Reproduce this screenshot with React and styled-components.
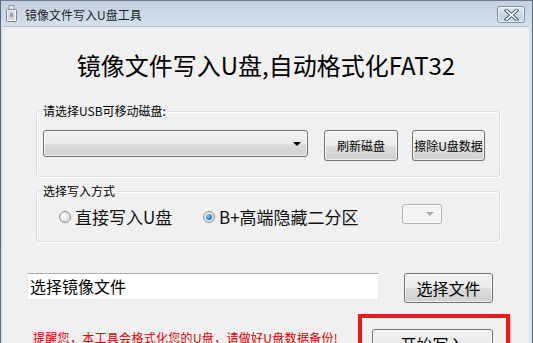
import React from "react";
import styled, { createGlobalStyle } from "styled-components";

const GlobalStyle = createGlobalStyle`
    html, body {
        margin: 0;
        padding: 0;
        background: #f0f0f0;
    }
    body {
        font-family: "Noto Sans CJK SC", "Liberation Sans", sans-serif;
    }
`;

const Frame = styled.div`
    width: 533px;
    height: 343px;
    box-sizing: border-box;
    overflow: hidden;
    display: flex;
    flex-direction: column;
    background: linear-gradient(#c2d0e0, #d6e1ee 26px, #dbe5f1);
    border-top: 1px solid #6f7c8b;
    border-left: 1px solid #5b6673;
    border-right: 1px solid #5b6673;
    padding: 0 3px 0 2px;
`;

const TitleBar = styled.div`
    height: 25px;
    display: flex;
    align-items: center;
    padding-left: 2px;
    flex-shrink: 0;
`;

const TitleText = styled.span`
    font-size: 12px;
    color: #1e1e1e;
    margin-left: 7px;
    line-height: 14px;
    padding-top: 2px;
`;

const CloseButton = styled.div`
    margin-left: auto;
    margin-right: 4px;
    margin-top: 2px;
    width: 28px;
    height: 17px;
    box-sizing: border-box;
    border: 1px solid #7d8ea3;
    border-radius: 3px;
    background: linear-gradient(#e3ebf4, #cdd9e7 50%, #c3d1e2 51%, #d3deeb);
    box-shadow: inset 0 0 0 1px rgba(255, 255, 255, 0.6);
    display: flex;
    align-items: center;
    justify-content: center;
`;

const Client = styled.div`
    flex: 1;
    background: #f0f0f0;
    border-top: 1px solid #b3c1d1;
    display: flex;
    flex-direction: column;
    padding-top: 23px;
`;

const Heading = styled.h1`
    margin: 0;
    font-size: 24px;
    font-weight: normal;
    line-height: 30px;
    text-align: center;
    color: #000;
`;

const GroupBox = styled.fieldset`
    margin: ${(p) => p.$top}px 0 0 33px;
    width: 464px;
    box-sizing: border-box;
    padding: 0;
    border: 1px solid #d5dfe5;
    border-radius: 3px;
    box-shadow: inset 1px 1px 0 #fff, 1px 1px 0 #fff;
    min-inline-size: 0;
`;

const Legend = styled.legend`
    font-size: 12px;
    line-height: 14px;
    padding: 0 2px;
    margin-left: 4px;
    color: #000;
`;

const DiskRow = styled.div`
    display: flex;
    align-items: flex-start;
    padding: 12px 13px 15px 6px;
`;

const ModeRow = styled.div`
    display: flex;
    align-items: center;
    height: 24px;
    padding: 7px 0 12px 22px;
`;

const Combo = styled.div`
    width: ${(p) => p.$w}px;
    height: ${(p) => p.$h}px;
    box-sizing: border-box;
    border: 1px solid ${(p) => (p.$disabled ? "#adb2b5" : "#707070")};
    border-radius: 3px;
    background: ${(p) =>
        p.$disabled
            ? "#f4f4f4"
            : "linear-gradient(#f2f2f2, #ebebeb 50%, #dddddd 51%, #cfcfcf)"};
    box-shadow: inset 0 0 0 1px rgba(255, 255, 255, 0.7);
    display: flex;
    align-items: center;
    justify-content: flex-end;
    padding-right: ${(p) => (p.$disabled ? 7 : 6)}px;
    align-self: flex-start;
    margin-top: ${(p) => p.$mt || 0}px;
`;

const Arrow = styled.span`
    width: 0;
    height: 0;
    border-left: 4px solid transparent;
    border-right: 4px solid transparent;
    border-top: 4px solid ${(p) => (p.$disabled ? "#a6a6a6" : "#000")};
`;

const Button = styled.div`
    width: ${(p) => p.$w}px;
    height: ${(p) => p.$h}px;
    box-sizing: border-box;
    margin-left: ${(p) => p.$ml || 0}px;
    border: 1px solid #707070;
    border-radius: 3px;
    background: linear-gradient(#f2f2f2, #ebebeb 50%, #dddddd 51%, #cfcfcf);
    box-shadow: inset 0 0 0 1px rgba(255, 255, 255, 0.7);
    display: flex;
    align-items: center;
    justify-content: center;
    font-size: ${(p) => p.$fs}px;
    color: #000;
    white-space: nowrap;
    flex-shrink: 0;
`;

const RadioItem = styled.label`
    display: flex;
    align-items: center;
    width: ${(p) => p.$w}px;
    font-size: 17px;
    line-height: 22px;
    color: #111;
    flex-shrink: 0;
`;

const RadioDot = styled.span`
    width: 12px;
    height: 12px;
    box-sizing: border-box;
    border-radius: 50%;
    border: 1px solid #8f8f8f;
    background: radial-gradient(circle at 40% 40%, #ffffff, #dcdcdc 70%, #c8c8c8);
    margin-right: 4px;
    display: flex;
    align-items: center;
    justify-content: center;
    flex-shrink: 0;

    &::after {
        content: "";
        display: ${(p) => (p.$checked ? "block" : "none")};
        width: 6px;
        height: 6px;
        border-radius: 50%;
        background: radial-gradient(circle at 35% 35%, #8fd0f7, #2a7bc8 55%, #1a4f90);
    }
`;

const FileRow = styled.div`
    display: flex;
    align-items: flex-start;
    margin-top: 31px;
    padding-left: 24px;
`;

const PathInput = styled.div`
    width: 352px;
    height: 27px;
    box-sizing: border-box;
    background: #fff;
    border: 1px solid #e3e9ef;
    border-top-color: #abadb3;
    font-size: 16px;
    line-height: 25px;
    padding-left: 2px;
    color: #000;
`;

const StartRow = styled.div`
    display: flex;
    align-items: flex-start;
    justify-content: space-between;
    margin-top: 11px;
    padding: 0 19px 0 30px;
`;

const Warning = styled.p`
    margin: 16px 0 0 0;
    font-size: 12px;
    line-height: 16px;
    letter-spacing: 0.3px;
    color: #e00000;
`;

const Highlight = styled.div`
    border: 4px solid #e31b1b;
    padding: 11px 13px 10px 10px;
    box-shadow: 1px 1px 2px rgba(0, 0, 0, 0.25);
`;

function UsbIcon() {
    return (
        <svg width="13" height="17" viewBox="0 0 13 17">
            <rect x="4" y="0.5" width="5" height="4" fill="#e8e8e8" stroke="#8a8f96" />
            <rect x="1.5" y="4.5" width="10" height="12" rx="1" fill="#f2f4f6" stroke="#7d848c" />
            <rect x="3" y="6" width="7" height="9" fill="#d4d9df" />
            <rect x="5" y="8" width="3" height="4" fill="#9aa3ad" />
        </svg>
    );
}

function CloseGlyph() {
    return (
        <svg width="15" height="12" viewBox="0 0 15 12">
            <path d="M2.5 1.5 L12.5 10.5 M12.5 1.5 L2.5 10.5" stroke="#4a5563" strokeWidth="3.6" strokeLinecap="square" />
            <path d="M2.5 1.5 L12.5 10.5 M12.5 1.5 L2.5 10.5" stroke="#ffffff" strokeWidth="1.6" strokeLinecap="square" />
        </svg>
    );
}

export default function App() {
    return (
        <>
            <GlobalStyle />
            <Frame>
                <TitleBar>
                    <UsbIcon />
                    <TitleText>镜像文件写入U盘工具</TitleText>
                    <CloseButton>
                        <CloseGlyph />
                    </CloseButton>
                </TitleBar>
                <Client>
                    <Heading>镜像文件写入U盘,自动格式化FAT32</Heading>

                    <GroupBox $top={24}>
                        <Legend>请选择USB可移动磁盘:</Legend>
                        <DiskRow>
                            <Combo $w={265} $h={27}>
                                <Arrow />
                            </Combo>
                            <Button $w={74} $h={31} $fs={12} $ml={16}>
                                刷新磁盘
                            </Button>
                            <Button $w={73} $h={31} $fs={12} $ml={14}>
                                擦除U盘数据
                            </Button>
                        </DiskRow>
                    </GroupBox>

                    <GroupBox $top={7}>
                        <Legend>选择写入方式</Legend>
                        <ModeRow>
                            <RadioItem $w={144}>
                                <RadioDot />
                                直接写入U盘
                            </RadioItem>
                            <RadioItem $w={199}>
                                <RadioDot $checked />
                                B+高端隐藏二分区
                            </RadioItem>
                            <Combo $w={40} $h={20} $mt={-1} $disabled>
                                <Arrow $disabled />
                            </Combo>
                        </ModeRow>
                    </GroupBox>

                    <FileRow>
                        <PathInput>选择镜像文件</PathInput>
                        <Button $w={89} $h={30} $fs={16} $ml={25}>
                            选择文件
                        </Button>
                    </FileRow>

                    <StartRow>
                        <Warning>提醒您，本工具会格式化您的U盘，请做好U盘数据备份!</Warning>
                        <Highlight>
                            <Button $w={121} $h={30} $fs={16}>
                                开始写入
                            </Button>
                        </Highlight>
                    </StartRow>
                </Client>
            </Frame>
        </>
    );
}
